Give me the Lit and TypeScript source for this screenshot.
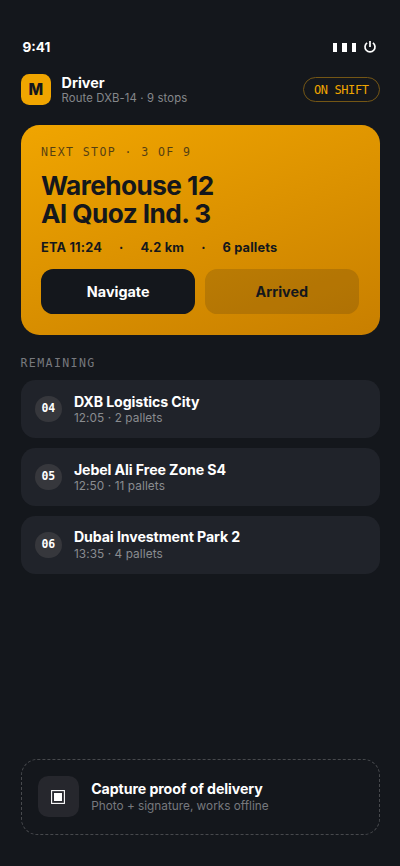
import { LitElement, html, css } from "lit";
import { customElement, property } from "lit/decorators.js";

@customElement("stop-row")
class StopRow extends LitElement {
  @property() num = "";
  @property() name = "";
  @property() detail = "";

  static styles = css`
    :host {
      display: flex;
      align-items: center;
      box-sizing: border-box;
      height: 58.7px;
      padding: 0 14.4px;
      gap: 12.3px;
      border-radius: 14.4px;
      background: #20232a;
    }
    .num {
      width: 26.7px;
      height: 26.7px;
      border-radius: 50%;
      background: #36373c;
      color: #fff;
      display: flex;
      align-items: center;
      justify-content: center;
      font: 700 11.5px/1 "DejaVu Sans Mono", monospace;
      letter-spacing: -0.3px;
    }
    .text {
      padding-top: 1px;
    }
    .name {
      font-size: 14.2px;
      line-height: 17.4px;
      font-weight: 700;
      letter-spacing: -0.1px;
      color: #fff;
    }
    .detail {
      font-size: 11.8px;
      line-height: 15.4px;
      letter-spacing: 0.09px;
      color: #8a8c90;
      margin-top: 1.4px;
    }
  `;

  render() {
    return html`
      <div class="num">${this.num}</div>
      <div class="text">
        <div class="name">${this.name}</div>
        <div class="detail">${this.detail}</div>
      </div>
    `;
  }
}

@customElement("app-root")
class AppRoot extends LitElement {
  static styles = css`
    :host {
      display: flex;
      flex-direction: column;
      box-sizing: border-box;
      width: 400px;
      height: 866px;
      padding: 0 20.5px 31px;
      overflow: hidden;
      background: #14171c;
      color: #fff;
      font-family: Inter, sans-serif;
    }
    .status {
      display: flex;
      justify-content: space-between;
      align-items: center;
      height: 18px;
      margin-top: 38px;
      padding: 0 2px;
      font-size: 13.6px;
      font-weight: 700;
    }
    .signals {
      display: flex;
      align-items: center;
    }
    .bar {
      width: 4.4px;
      height: 9px;
      margin-right: 5px;
      background: #fff;
    }
    .power {
      display: block;
      margin-left: 1.5px;
      margin-right: 1px;
    }
    .header {
      display: flex;
      align-items: center;
      height: 32px;
      margin-top: 17.5px;
    }
    .avatar {
      width: 30.8px;
      height: 30.8px;
      border-radius: 8.2px;
      background: #f0a500;
      color: #14171c;
      display: flex;
      align-items: center;
      justify-content: center;
      font-size: 15.6px;
      font-weight: 800;
    }
    .who {
      flex: 1;
      margin-left: 10.3px;
      padding-top: 1.4px;
    }
    .role {
      font-size: 14.36px;
      line-height: 15.4px;
      font-weight: 700;
    }
    .route {
      margin-top: 1.5px;
      font-size: 11.3px;
      line-height: 13.5px;
      letter-spacing: 0.13px;
      color: #85878b;
    }
    .shift {
      box-sizing: border-box;
      height: 24.6px;
      padding: 0 10px;
      border: 1px solid #745615;
      border-radius: 13px;
      display: flex;
      align-items: center;
      color: #f0a500;
      font: 12px/1 "DejaVu Sans Mono", monospace;
      letter-spacing: -0.42px;
    }
    .card {
      box-sizing: border-box;
      height: 209.5px;
      margin-top: 19.5px;
      padding: 20.5px;
      border-radius: 18.5px;
      background: linear-gradient(160deg, #f0a500, #c87f00);
      color: #14171c;
    }
    .eyebrow {
      padding-top: 0.8px;
      font: 11.6px/13px "DejaVu Sans Mono", monospace;
      letter-spacing: 1.37px;
      opacity: 0.7;
    }
    .place {
      margin-top: 13px;
      font-size: 26.2px;
      line-height: 28px;
      font-weight: 700;
      letter-spacing: -0.56px;
    }
    .facts {
      display: flex;
      gap: 17px;
      margin-top: 12px;
      font-size: 12.8px;
      line-height: 15.5px;
      font-weight: 700;
      letter-spacing: 0.16px;
    }
    .actions {
      display: flex;
      gap: 9.3px;
      margin-top: 13px;
    }
    .action {
      flex: 1;
      height: 45.1px;
      border-radius: 12.3px;
      display: flex;
      align-items: center;
      justify-content: center;
      padding-top: 1px;
      box-sizing: border-box;
      font-size: 14.36px;
      font-weight: 700;
      background: rgba(20, 23, 28, 0.15);
    }
    .primary {
      background: #14171c;
      color: #fff;
    }
    .section {
      margin-top: 22.7px;
      font: 11.6px/13px "DejaVu Sans Mono", monospace;
      letter-spacing: 1.37px;
      color: #77797e;
    }
    .stops {
      display: flex;
      flex-direction: column;
      gap: 9.3px;
      margin-top: 9.6px;
    }
    .capture {
      display: flex;
      align-items: center;
      box-sizing: border-box;
      height: 76.5px;
      margin-top: auto;
      padding: 0 16.4px;
      gap: 12.3px;
      border: 1px dashed #47494d;
      border-radius: 16.4px;
    }
    .camera {
      width: 41px;
      height: 41px;
      border-radius: 10.3px;
      background: #26272d;
      display: flex;
      align-items: center;
      justify-content: center;
    }
    .cap-text {
      padding-top: 1.4px;
    }
    .cap-title {
      font-size: 14.2px;
      line-height: 17.4px;
      font-weight: 700;
      letter-spacing: -0.09px;
    }
    .cap-sub {
      font-size: 11.8px;
      line-height: 15.4px;
      color: #77797e;
      margin-top: 1.4px;
    }
  `;

  private stops = [
    ["04", "DXB Logistics City", "12:05 · 2 pallets"],
    ["05", "Jebel Ali Free Zone S4", "12:50 · 11 pallets"],
    ["06", "Dubai Investment Park 2", "13:35 · 4 pallets"],
  ];

  render() {
    return html`
      <div class="status">
        <span>9:41</span>
        <span class="signals">
          <i class="bar"></i><i class="bar"></i><i class="bar"></i>
          <svg class="power" width="14" height="14" viewBox="0 0 14 14" fill="none" stroke="#fff" stroke-width="1.7">
            <path d="M7 1v6M4.1 2.9a5 5 0 1 0 5.8 0" />
          </svg>
        </span>
      </div>
      <div class="header">
        <div class="avatar">M</div>
        <div class="who">
          <div class="role">Driver</div>
          <div class="route">Route DXB-14 · 9 stops</div>
        </div>
        <div class="shift">ON SHIFT</div>
      </div>
      <div class="card">
        <div class="eyebrow">NEXT STOP · 3 OF 9</div>
        <div class="place">Warehouse 12<br />Al Quoz Ind. 3</div>
        <div class="facts">
          <span>ETA 11:24</span><span>·</span><span>4.2 km</span><span>·</span><span>6 pallets</span>
        </div>
        <div class="actions">
          <div class="action primary">Navigate</div>
          <div class="action">Arrived</div>
        </div>
      </div>
      <div class="section">REMAINING</div>
      <div class="stops">
        ${this.stops.map(
          ([num, name, detail]) => html`<stop-row .num=${num} .name=${name} .detail=${detail}></stop-row>`
        )}
      </div>
      <div class="capture">
        <div class="camera">
          <svg width="14" height="14" viewBox="0 0 14 14">
            <rect x="0.6" y="0.6" width="12.8" height="12.8" fill="none" stroke="#fff" stroke-width="1.1" />
            <rect x="3" y="3" width="8" height="8" fill="#fff" />
          </svg>
        </div>
        <div class="cap-text">
          <div class="cap-title">Capture proof of delivery</div>
          <div class="cap-sub">Photo + signature, works offline</div>
        </div>
      </div>
    `;
  }
}
